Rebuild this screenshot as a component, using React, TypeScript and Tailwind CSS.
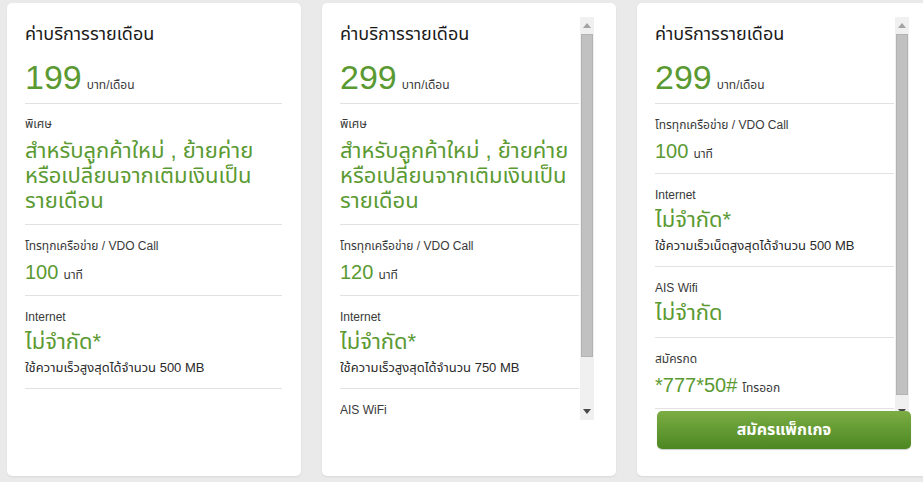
import React from "react";

const font = { fontFamily: '"Liberation Sans", "Noto Sans", "Noto Sans Thai", sans-serif' };

function Label({ children }: { children: React.ReactNode }) {
  return <div className="text-[12px] leading-[16px] text-[#3a3a3a]">{children}</div>;
}

function Section({ children, className = "" }: { children: React.ReactNode; className?: string }) {
  return <div className={"border-t border-[#e2e2e2] " + className}>{children}</div>;
}

function Header({ price }: { price: string }) {
  return (
    <div className="pb-[6px]">
      <div className="pt-[4px] text-[18px] leading-[26px] text-[#1a1a1a]">ค่าบริการรายเดือน</div>
      <div className="mt-[10px] flex items-baseline gap-[5px] h-[40px]">
        <span className="text-[34px] leading-[40px] text-[#5b9a32]">{price}</span>
        <span className="text-[12px] text-[#3a3a3a]">บาท/เดือน</span>
      </div>
    </div>
  );
}

function Special() {
  return (
    <Section className="pt-[12px] pb-[11px]">
      <Label>พิเศษ</Label>
      <div className="mt-[6px] text-[22px] leading-[25px] text-[#5b9a32]">
        สำหรับลูกค้าใหม่ , ย้ายค่าย
        <br />
        หรือเปลี่ยนจากเติมเงินเป็น
        <br />
        รายเดือน
      </div>
    </Section>
  );
}

function Calls({ mins }: { mins: string }) {
  return (
    <Section className="pt-[13px] pb-[11px]">
      <Label>โทรทุกเครือข่าย / VDO Call</Label>
      <div className="mt-[6px] flex items-baseline gap-[5px] h-[24px]">
        <span className="text-[20px] leading-[24px] text-[#5b9a32]">{mins}</span>
        <span className="text-[12px] text-[#3a3a3a]">นาที</span>
      </div>
    </Section>
  );
}

function Internet({ note }: { note: string }) {
  return (
    <Section className="pt-[13px] pb-[12px]">
      <Label>Internet</Label>
      <div className="mt-[3px] text-[22px] leading-[28px] text-[#5b9a32]">ไม่จำกัด*</div>
      <div className="mt-[4px] text-[13px] leading-[16px] text-[#2a2a2a]">{note}</div>
    </Section>
  );
}

function Scrollbar({ thumbH }: { thumbH: number }) {
  return (
    <div className="ml-[1px] w-[14px] h-full bg-[#f0f0f0] flex flex-col items-center">
      <div className="h-[17px] w-full flex items-center justify-center">
        <svg width="8" height="5" viewBox="0 0 8 5">
          <path d="M4 0 L8 5 L0 5 Z" fill="#a3a3a3" />
        </svg>
      </div>
      <div className="w-[12px] bg-[#c1c1c1] border border-[#b3b3b3]" style={{ height: thumbH }} />
      <div className="flex-1" />
      <div className="h-[17px] w-full flex items-center justify-center">
        <svg width="8" height="5" viewBox="0 0 8 5">
          <path d="M0 0 L8 0 L4 5 Z" fill="#4a4a4a" />
        </svg>
      </div>
    </div>
  );
}

export default function App() {
  return (
    <div
      className="w-[923px] h-[482px] overflow-hidden bg-[#eaeaea] pt-[3px] pl-[7px] flex gap-[21px]"
      style={font}
    >
      {/* Card 1 */}
      <div className="shrink-0 w-[294px] h-[473px] bg-white rounded-[5px] shadow-[0_1px_2px_rgba(0,0,0,0.08)] pt-[14px] pl-[18px] pr-[19px]">
        <Header price="199" />
        <Special />
        <Calls mins="100" />
        <Internet note="ใช้ความเร็วสูงสุดได้จำนวน 500 MB" />
        <div className="border-t border-[#e2e2e2]" />
      </div>

      {/* Card 2 */}
      <div className="shrink-0 w-[294px] h-[473px] bg-white rounded-[5px] shadow-[0_1px_2px_rgba(0,0,0,0.08)] pt-[14px] pl-[18px] pr-[22px]">
        <div className="flex h-[403px]">
          <div className="flex-1 overflow-hidden">
            <Header price="299" />
            <Special />
            <Calls mins="120" />
            <Internet note="ใช้ความเร็วสูงสุดได้จำนวน 750 MB" />
            <Section className="pt-[13px]">
              <Label>AIS WiFi</Label>
            </Section>
          </div>
          <Scrollbar thumbH={323} />
        </div>
      </div>

      {/* Card 3 */}
      <div className="shrink-0 w-[294px] h-[473px] bg-white rounded-[5px] shadow-[0_1px_2px_rgba(0,0,0,0.08)] pt-[14px] pl-[18px] pr-[22px]">
        <div className="flex h-[403px]">
          <div className="flex-1 overflow-hidden">
            <Header price="299" />
            <Section className="pt-[13px] pb-[10px]">
              <Label>โทรทุกเครือข่าย / VDO Call</Label>
              <div className="mt-[6px] flex items-baseline gap-[5px] h-[24px]">
                <span className="text-[20px] leading-[24px] text-[#5b9a32]">100</span>
                <span className="text-[12px] text-[#3a3a3a]">นาที</span>
              </div>
            </Section>
            <Internet note="ใช้ความเร็วเน็ตสูงสุดได้จำนวน 500 MB" />
            <Section className="pt-[13px] pb-[10px]">
              <Label>AIS Wifi</Label>
              <div className="mt-[3px] text-[22px] leading-[28px] text-[#5b9a32]">ไม่จำกัด</div>
            </Section>
            <Section className="pt-[13px] pb-[11px]">
              <Label>สมัครกด</Label>
              <div className="mt-[6px] flex items-baseline gap-[5px] h-[24px]">
                <span className="text-[20px] leading-[24px] text-[#5b9a32]">*777*50#</span>
                <span className="text-[12px] text-[#3a3a3a]">โทรออก</span>
              </div>
            </Section>
            <div className="border-t border-[#e2e2e2]" />
          </div>
          <Scrollbar thumbH={361} />
        </div>
        <button className="relative z-10 -mt-[9px] ml-[2px] w-[254px] h-[38px] rounded-[5px] bg-gradient-to-b from-[#7bad43] to-[#4c8722] text-white text-[16px] font-bold flex items-center justify-center shadow-[0_1px_1px_rgba(0,0,0,0.2)]">
          สมัครแพ็กเกจ
        </button>
      </div>
    </div>
  );
}
